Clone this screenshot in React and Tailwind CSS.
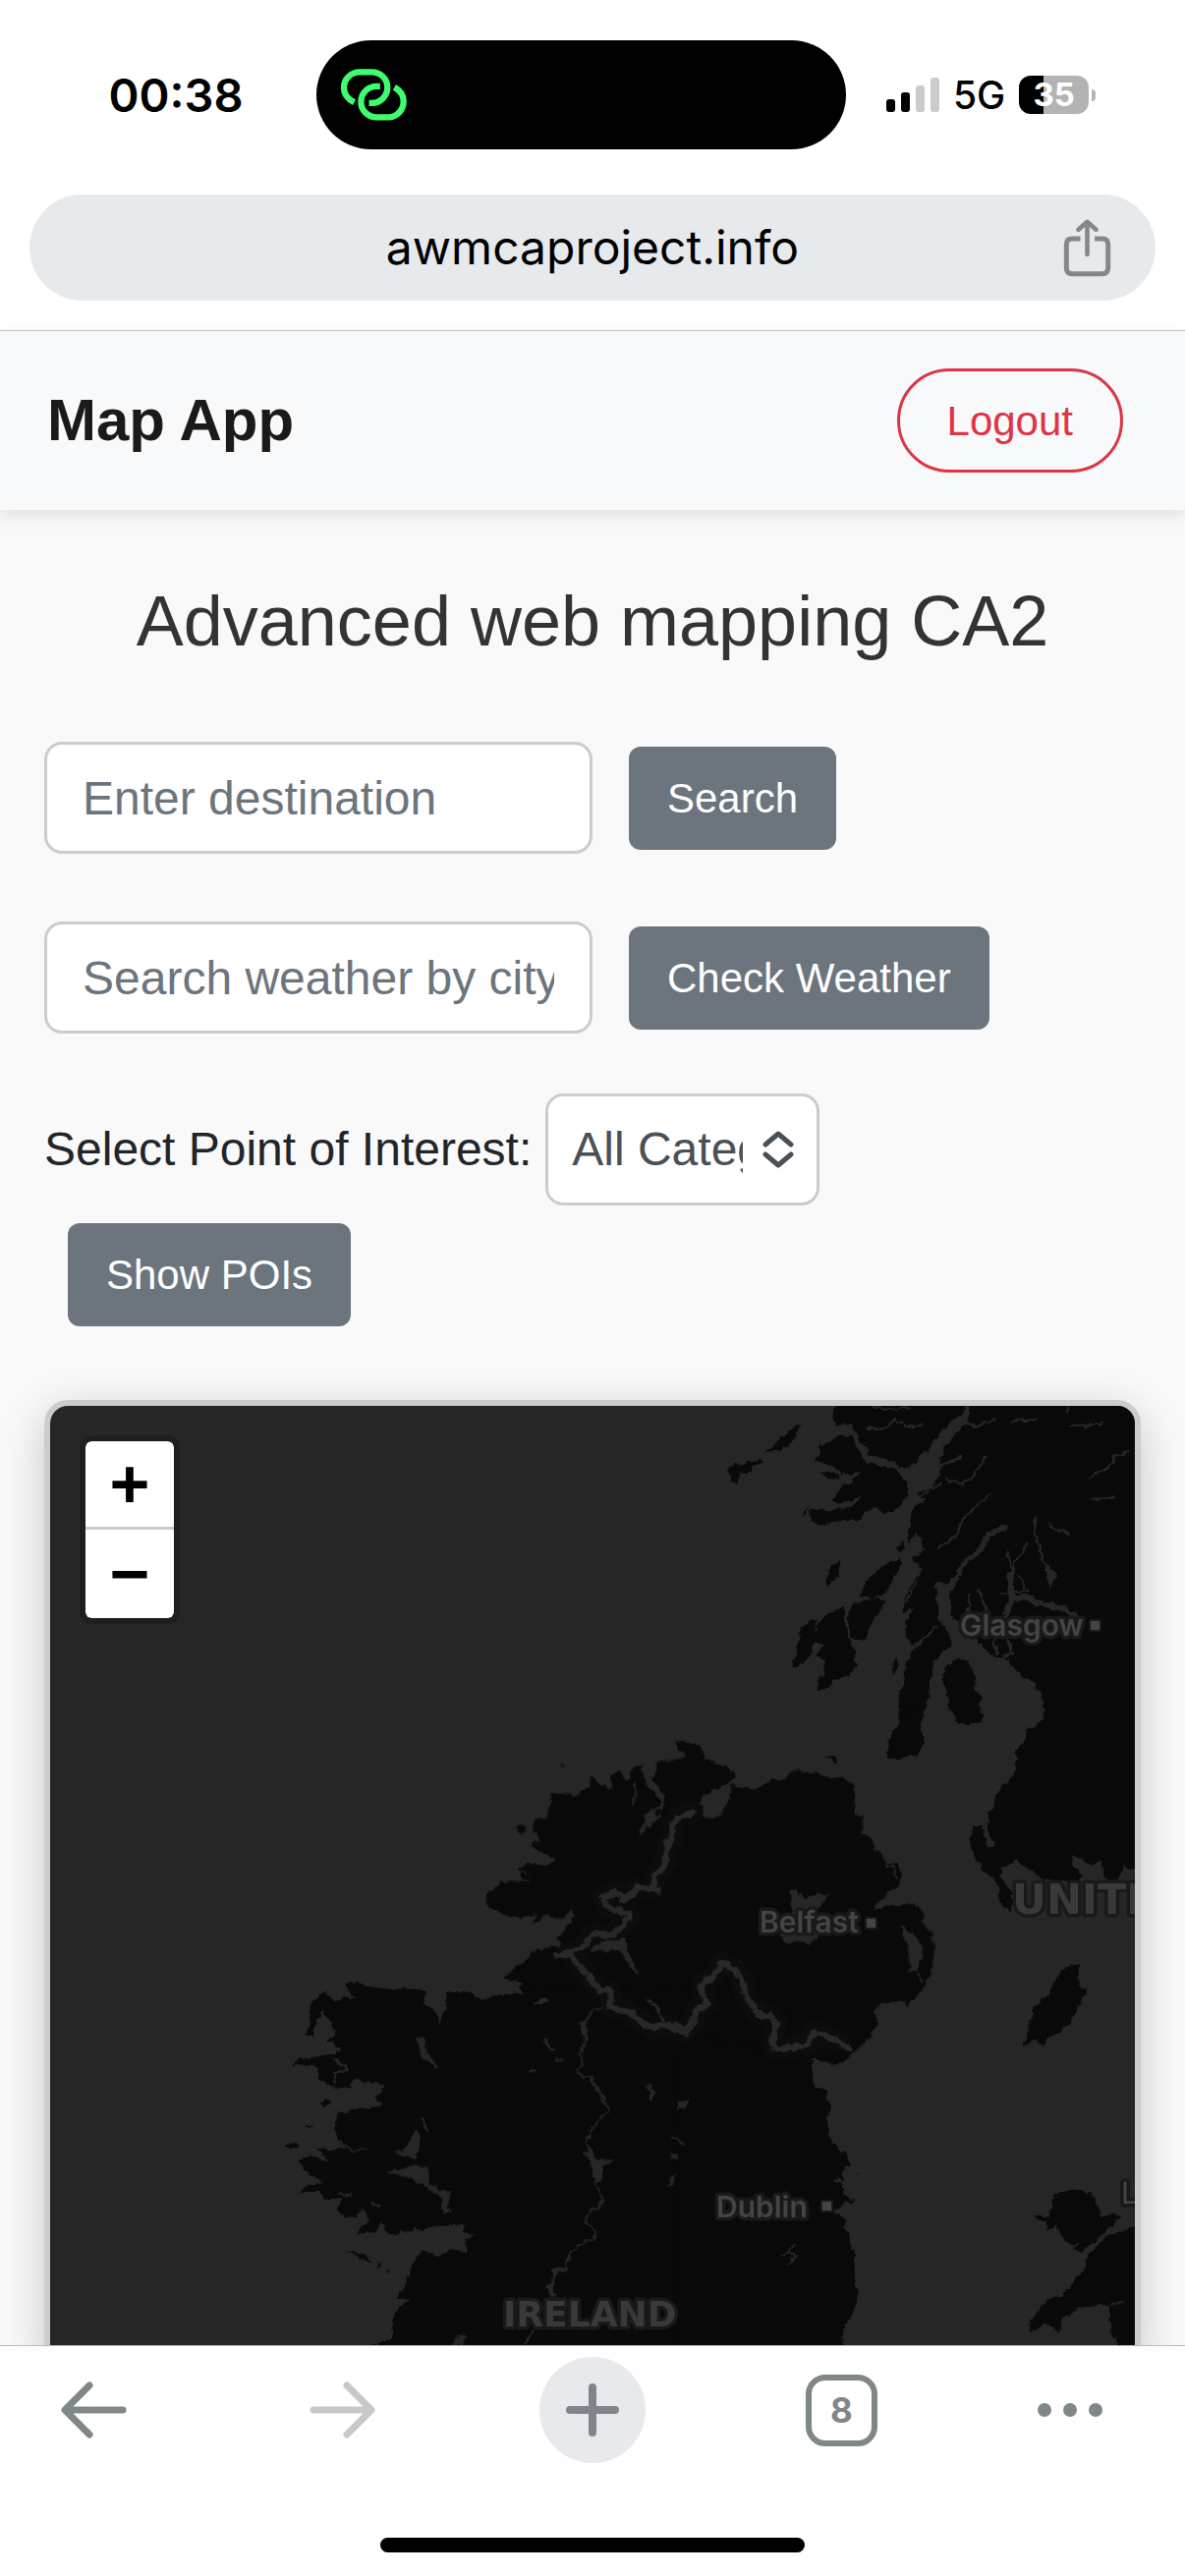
import React from 'react';

const INTER = "font-['Inter','Liberation_Sans',sans-serif]";

function StatusBar() {
  return (
    <div className={`grid grid-cols-[322fr_539fr_345fr] items-center pt-[41px] ${INTER}`}>
      <time className="justify-self-center pl-9 text-[47px] leading-none font-semibold">00:38</time>
      <div className="flex h-[111px] items-center rounded-full bg-black pl-6">
        <svg viewBox="138 118 208 164" className="h-[55px] w-[69px]" fill="none" stroke="#3dff6d" strokeWidth="19" aria-hidden="true">
          <path d="M182 223C162 213 150 198 150 178A48 48 0 0 1 198 130H236A47 47 0 0 1 236 225H227" />
          <path d="M261 174H250A47 47 0 0 0 250 269H286A48 48 0 0 0 333 220C333 200 322 186 305 177" />
        </svg>
      </div>
      <div className="flex items-center gap-3.5 pl-[41px]">
        <div className="flex h-[35px] items-end gap-1.5">
          <span className="h-[13px] w-[9px] rounded-[3px] bg-black" />
          <span className="h-5 w-[9px] rounded-[3px] bg-black" />
          <span className="h-[27px] w-[9px] rounded-[3px] bg-[#cbcbcb]" />
          <span className="h-[35px] w-[9px] rounded-[3px] bg-[#cbcbcb]" />
        </div>
        <span className="text-[39px] leading-none font-medium">5G</span>
        <div className="flex items-center gap-[3px]">
          <span className="flex h-[39px] w-[71px] items-center justify-center rounded-xl bg-linear-to-r from-black from-35% to-[#b3b3b3] to-35% text-[33px] leading-none font-bold text-white">35</span>
          <span className="h-3 w-1 rounded-r-full bg-[#b3b3b3]" />
        </div>
      </div>
    </div>
  );
}

function AddressBar() {
  return (
    <div className="px-[30px] pt-[46px] pb-[30px]">
      <div className="grid h-[108px] grid-cols-[1fr_auto_1fr] items-center rounded-full bg-[#e6eaed]">
        <span />
        <span className={`text-[48px] leading-none ${INTER}`}>awmcaproject.info</span>
        <button type="button" aria-label="Share" className="mr-[45px] justify-self-end">
          <svg viewBox="664 490 148 180" className="h-[60px] w-[49px]" fill="none" stroke="#82888d" strokeWidth="15" aria-hidden="true">
            <path d="M717 553H692Q674 553 674 571V643Q674 661 692 661H784Q802 661 802 643V571Q802 553 784 553H761" />
            <path d="M738 503V601M711 525L738 501L765 525" strokeWidth="14" strokeLinecap="round" strokeLinejoin="round" />
          </svg>
        </button>
      </div>
    </div>
  );
}

const GREY_BUTTON = 'h-[105px] rounded-xl bg-[#6c757d] px-[39px] text-[42px] text-white';
const FIELD = 'h-[114px] rounded-[18px] border-3 border-[#ccc] bg-white text-[48px]';

function SearchRow({ id, label, button }) {
  return (
    <form className="flex items-center gap-[37px]" onSubmit={(e) => e.preventDefault()}>
      <input id={id} type="text" aria-label={label} placeholder={label} className={`${FIELD} w-[558px] px-9 text-[#495057] placeholder:text-[#6c757d]`} />
      <button type="submit" className={GREY_BUTTON}>{button}</button>
    </form>
  );
}

const THIRD = 1 / 3;
const scotland = `translate(700 1400) scale(${THIRD})`;
const ulster = `translate(460 1740) scale(${THIRD})`;
const connacht = `translate(260 1960) scale(${THIRD})`;
const irishSea = `translate(700 1900) scale(${THIRD})`;

function MapCanvas() {
  return (
    <svg viewBox="51 1431 1104 975" preserveAspectRatio="xMinYMin slice" className="h-full w-full bg-[#262626]" role="img" aria-label="Map of Ireland and western Britain">
      <defs>
        <filter id="coast" x="-5%" y="-5%" width="110%" height="110%" colorInterpolationFilters="sRGB">
          <feTurbulence type="fractalNoise" baseFrequency="0.14" numOctaves="3" seed="4" />
          <feDisplacementMap in="SourceGraphic" scale="7" xChannelSelector="R" yChannelSelector="G" />
        </filter>
      </defs>
      <g filter="url(#coast)">
        <g fill="#090909">
          <g transform={scotland}>
            <path d="M455 80L438 125 450 148 500 150 520 185 550 238 620 262 655 285 690 270 725 235 760 185 810 140 835 120 852 80Z" />
            <path d="M470 180L435 200 398 215 405 235 390 262 440 275 470 300 500 302 527 290 500 325 470 340 440 385 470 390 530 372 500 400 430 415 400 405 376 408 375 440 400 460 430 448 515 442 560 408 580 400 600 427 640 405 667 370 670 328 640 290 590 275 545 268 520 225 500 190Z" />
            <path d="M342 150L318 160 285 187 262 214 240 236 272 230 308 215 330 185Z" />
            <path d="M230 262L205 256 175 270 140 268 123 290 130 320 152 330 162 300 195 295 200 272Z" />
            <path d="M404 295L425 290 465 305 460 315 430 312ZM370 400L350 420 355 432Z" />
            <path d="M845 80L860 93 855 145 815 178 780 225 768 260 772 300 745 345 700 360 725 385 692 400 680 430 675 510 700 480 725 530 685 560 718 590 690 630 660 690 655 725 690 710 668 745 665 800 688 832 665 885 658 940 645 975 643 1075 612 1105 608 1165 640 1172 700 1157 722 1110 715 1075 712 1060 735 990 742 930 750 870 805 825 808 800 785 765 765 730 755 635 800 645 795 700 810 765 860 800 900 825 930 858 975 870 1015 920 1060 940 1077 980 1090 1025 1080 1060 1035 1085 1030 1115 1003 1150 1000 1200 990 1225 940 1280 935 1310 915 1350 918 1390 942 1440 915 1442 905 1400 895 1370 870 1380 862 1420 880 1480 900 1510 935 1540 950 1565 950 1610 985 1638 1000 1600 955 1530 965 1500 1005 1478 1040 1510 1090 1540 1170 1545 1210 1530 1175 1500 1175 1460 1230 1495 1260 1480 1270 1540 1310 1540 1330 1500 1380 1510 1380 80Z" />
            <path d="M652 555L600 580 540 630 527 672 560 684 600 668 645 590Z" />
            <path d="M580 680L510 695 490 725 490 765 500 803 545 805 560 755 580 735 605 690Z" />
            <path d="M475 705L430 725 395 760 385 790 392 742 345 770 335 825 318 888 335 892 365 865 385 820 420 820 390 850 415 870 420 910 393 930 395 960 430 958 440 930 490 918 515 890 508 835 488 800 480 750Z" />
            <path d="M470 563L440 580 420 625 428 650 455 615ZM642 858L625 880 630 912 640 890ZM660 505L635 530 655 538Z" />
            <path d="M830 862L790 885 777 935 793 970 797 1015 820 1052 850 1068 895 1060 905 1040 885 1005 905 985 875 960 880 920 860 880Z" />
            <path d="M412 1165L455 1165 450 1190 440 1172Z" />
          </g>
          <g transform={ulster}>
            <path d="M680 93L740 105 765 120 770 150 830 170 865 192 855 217 780 255 735 310 775 330 820 330 835 290 850 260 853 228 870 238 940 242 975 215 1020 208 1050 183 1100 190 1160 215 1190 203 1225 235 1232 270 1225 320 1258 325 1250 375 1275 390 1300 435 1330 470 1360 468 1373 510 1365 540 1310 575 1285 612 1340 600 1405 590 1437 610 1440 660 1465 680 1475 740 1465 790 1452 830 1440 850 1415 880 1390 905 1380 888 1310 895 1293 915 1298 960 1275 1005 1225 1048 1190 1078 1160 1082 1100 1060 1093 1080 1095 1120 1110 1160 1145 1165 1143 1230 -20 1230 -20 860 50 865 90 888 130 873 160 880 195 917 213 905 175 878 222 868 202 850 215 835 155 820 235 758 240 740 325 725 340 715 320 700 350 665 378 625 360 612 330 642 290 625 242 662 265 625 205 637 160 628 105 602 103 570 150 530 190 520 245 530 205 512 215 500 245 510 200 485 240 470 290 475 320 455 280 440 243 425 245 400 270 400 243 365 255 335 290 330 305 252 350 258 370 268 420 235 425 202 450 225 490 245 484 200 515 185 535 225 550 180 578 165 588 215 625 265 640 285 590 320 570 385 615 345 640 330 648 285 645 255 612 215 625 158 690 155 715 142 690 120Z" />
            <path d="M197 352L225 360 220 382 200 375ZM327 165L350 180 335 175ZM1368 20L1368 -10 1440 -10Z" />
          </g>
          <g transform={connacht}>
            <path d="M600 200L660 205 690 228 755 212 900 200 1400 180 1400 1370 340 1370 360 1280 415 1265 420 1200 440 1160 475 1140 428 1140 455 1100 470 1050 510 990 555 1012 600 985 650 998 640 960 670 945 628 938 645 910 560 920 402 942 385 905 365 940 310 938 348 900 328 865 310 888 270 890 250 870 262 835 225 838 190 815 135 815 160 790 208 783 150 750 130 715 165 700 222 720 190 680 230 685 275 680 245 640 248 575 300 562 392 550 365 525 390 510 388 482 320 475 295 472 290 495 250 500 215 485 190 460 190 432 115 425 130 405 170 402 232 392 265 378 222 352 245 330 230 295 205 262 180 300 180 342 158 335 165 290 172 235 210 200 240 235 265 215 310 225 270 185 290 170 350 187 420 195 470 190 518 200 515 240 545 255 562 295 575 260Z" />
            <path d="M190 545L215 532 232 542 212 553ZM150 615L172 608 165 618ZM88 678L110 665 135 662 120 678ZM280 992L340 1008 355 1028 315 1015ZM365 1045L380 1027 388 1040 372 1050ZM395 1052L412 1055 402 1063Z" />
          </g>
          <g transform={irishSea}>
            <path d="M-40 500L385 590 375 630 385 665 425 683 420 715 435 730 425 770 430 815 460 860 490 885 492 910 470 930 475 1000 508 1020 480 1030 445 1050 480 1075 485 1110 510 1180 510 1280 525 1300 500 1370 475 1405 467 1550 -40 1550Z" />
            <path d="M1198 297L1150 308 1125 335 1105 385 1055 430 1045 480 1040 510 1020 550 1060 530 1085 545 1110 520 1150 490 1185 455 1190 430 1218 380 1195 365 1192 335Z" />
            <path d="M1180 985L1115 1000 1110 1050 1100 1075 1063 1060 1068 1078 1095 1085 1105 1108 1125 1095 1145 1135 1200 1180 1255 1135 1325 1065 1290 1060 1260 1072 1250 1030 1230 995Z" />
            <path d="M1380 1090L1365 1097 1320 1117 1272 1130 1218 1187 1208 1235 1140 1310 1090 1330 1040 1400 1040 1418 1100 1395 1135 1422 1145 1380 1180 1350 1260 1335 1290 1350 1290 1410 1325 1480 1380 1550Z" />
            <path d="M512 937L525 937 522 943Z" />
          </g>
        </g>
        <g fill="none" stroke="#262626" strokeLinejoin="round" strokeLinecap="round">
          <g transform={scotland} strokeWidth="7">
            <path d="M545 165L600 162 630 135 665 152 712 153M560 95L600 102 680 97M850 145L885 155 940 132M992 138L1030 138 1070 133M1170 152L1220 153 1268 145M1160 93L1158 112M1222 308L1280 285 1305 248 1345 232M1235 378L1297 370M770 275L835 250M790 316L840 330 865 315 885 285 907 248" />
            <path d="M768 527L815 495 845 430 895 385 925 362M1057 437L1065 500 1085 570M1102 455L1120 470 1168 483M1040 512L1000 570 988 620M975 535L990 590M1008 605L1030 650M887 655L912 715M858 672L862 720 900 735M690 828L735 795 758 768M1040 655L960 668" />
            <path d="M780 690L830 600 850 565 895 535 912 490 967 462" strokeWidth="15" />
            <path d="M780 650L785 740 830 800" strokeWidth="40" />
            <path d="M985 610L990 680 970 730M1180 730L1150 712 1070 695 1035 675 990 683" strokeWidth="17" />
            <path d="M700 310L760 250M710 370L770 330M688 550L725 530M660 700L700 630" strokeWidth="5" />
            <path d="M935 815L945 850M980 815L988 845 960 865M878 805L882 830" strokeWidth="10" />
            <path d="M1088 565L1132 612 1102 650Z" fill="#262626" stroke="none" />
          </g>
          <g transform={ulster}>
            <path d="M735 315L690 330 675 350 670 400 655 410 655 470 620 505 612 545 570 545 520 585 500 555 460 572 475 605 545 625 520 660 490 690 430 685 410 720 355 742 395 790 450 855 485 860 485 910 545 925 600 970 660 965 700 985 735 960 745 920 780 900 760 855 765 835 800 815 825 770 870 800 890 840 900 880 940 935 975 935 990 960 975 1025 995 1040 1090 1022 1100 990 1130 990 1180 1015" stroke="#0c0c0c" strokeWidth="70" />
            <path d="M735 315L690 330 675 350 670 400 655 410 655 470 620 505 612 545 570 545 520 585M612 545L632 555M500 555L460 572 475 605 545 625 520 660 490 690 430 685 410 720 355 742 395 790 450 855 485 860 485 910 545 925 600 970 660 965 700 985 735 960 745 920 780 900 760 855 765 835 800 815 825 770 870 800 890 840 900 880 940 935 975 935 990 960 975 1025 995 1040 1090 1022 1100 990 1130 990 1215 1035M500 555L520 570M320 750L360 745" stroke="#282828" strokeWidth="18" />
            <path d="M690 965L715 985 740 945" strokeWidth="24" />
            <path d="M595 888L625 905 645 955M250 893L292 887" strokeWidth="9" />
            <path d="M462 908L425 925 405 960 407 1010 392 1050 398 1080 385 1100 400 1125 425 1118 440 1155 462 1200" strokeWidth="6" />
            <path d="M390 955L413 955 405 1015Z" fill="#262626" strokeWidth="4" />
            <path d="M425 735L450 710 530 700 535 740 570 810 530 760 510 735Z" fill="#262626" strokeWidth="3" />
            <path d="M1050 540L1032 560 1040 620 1000 690 1020 712 1060 708 1095 720 1115 690 1120 610 1150 565 1125 562 1085 575 1060 565Z" fill="#262626" stroke="none" />
            <path d="M1372 660L1415 690 1437 730 1432 770 1415 795 1385 808 1400 790 1393 720 1380 700Z" fill="#262626" stroke="none" />
            <path d="M1415 795L1438 830M1330 480L1345 480 1358 515M555 225L560 255 552 290" strokeWidth="6" />
            <path d="M285 1010L308 1040M315 1068L335 1068M240 1105L255 1100M602 1150L615 1170 605 1190" strokeWidth="9" />
            <circle cx="632" cy="313" r="10" fill="#090909" stroke="none" />
          </g>
          <g transform={connacht}>
            <path d="M1008 640L1015 690 1000 695 1025 720 1035 785 1052 780 1062 730 1095 718 1070 712 1045 722 1020 680ZM495 340L515 345 525 390 555 430 545 438 530 412 510 405ZM490 625L502 650 485 710 455 705 425 692 455 685ZM400 750L440 745 480 735 525 738 530 790 580 815 598 818 585 840 595 875 575 880 565 820 520 800 480 770 430 758ZM905 1045L955 1045 925 1060 905 1095 915 1130 900 1130 885 1100 912 1075ZM605 1260L640 1250 635 1280 605 1280ZM1300 535L1320 535 1315 550 1288 560ZM1268 690L1288 710 1275 710ZM1280 762L1280 780 1260 793Z" fill="#262626" strokeWidth="3" />
            <path d="M1025 460L1040 500 1060 520 1078 565 1040 605 1015 650M1042 790L1062 840 1050 860 1018 875 1008 905 1042 940 1035 962 1005 965 965 995 945 1040M850 1235L822 1275M262 662L295 685 335 685M510 590L525 630M1275 645L1312 670" strokeWidth="6" />
            <path d="M238 405L280 440 240 455 245 480M250 820L290 822M355 845L380 860M1205 490L1210 525" strokeWidth="8" />
          </g>
          <g transform={irishSea} strokeWidth="6">
            <path d="M325 1155L310 1180 290 1190M315 1180L330 1190 305 1210M450 960L475 965M1175 1160L1190 1150M1290 1340L1328 1328" />
          </g>
        </g>
      </g>
      <g fill="#444" stroke="#191919" strokeWidth="7" strokeLinejoin="round" paintOrder="stroke" fontSize="30" fontWeight="600" fontFamily="Inter, sans-serif">
        <text x="977" y="1665">Glasgow</text>
        <text x="773" y="1967">Belfast</text>
        <text x="729" y="2257">Dublin</text>
        <g fontFamily="'DejaVu Sans', sans-serif" fill="#393939" fontWeight="700">
          <text x="512" y="2368" fontSize="36">IRELAND</text>
          <text x="1030" y="1948" fontSize="43">UNITED</text>
        </g>
        <text x="1141" y="2243" fontWeight="400">L</text>
        <path d="M1110 1650h9v9h-9zM882 1953h9v9h-9zM837 2241h9v9h-9z" strokeWidth="4" />
      </g>
    </svg>
  );
}

function MapPanel() {
  return (
    <section className="relative -mb-6 min-h-0 flex-1 overflow-hidden rounded-3xl border-6 border-[#ccc] shadow-[0_12px_45px_rgba(0,0,0,0.2)]">
      <MapCanvas />
      <div className="absolute top-[30px] left-[30px] flex flex-col overflow-hidden rounded-xl border-6 border-black/20 bg-clip-padding text-[70px] leading-none font-bold text-black">
        <button type="button" aria-label="Zoom in" className="flex h-[90px] w-[90px] items-center justify-center rounded-t-md border-b-3 border-[#ccc] bg-white">+</button>
        <button type="button" aria-label="Zoom out" className="flex h-[90px] w-[90px] items-center justify-center rounded-b-md bg-white">−</button>
      </div>
    </section>
  );
}

function BrowserToolbar() {
  return (
    <footer className="relative border-t border-[#b9b9bb] bg-white">
      <nav aria-label="Browser" className="grid grid-cols-[190fr_318fr_190fr_317fr_191fr] items-center justify-items-center pt-[11px] text-[#7f8789]">
        <button type="button" aria-label="Back">
          <svg viewBox="0 0 68 60" className="h-[60px] w-[68px]" fill="none" stroke="currentColor" strokeWidth="7" strokeLinecap="round" strokeLinejoin="round"><path d="M64 30H6M30 5L5 30L30 55" /></svg>
        </button>
        <button type="button" aria-label="Forward" disabled className="text-[#c8c8c8]">
          <svg viewBox="0 0 68 60" className="h-[60px] w-[68px]" fill="none" stroke="currentColor" strokeWidth="7" strokeLinecap="round" strokeLinejoin="round"><path d="M4 30H62M38 5L63 30L38 55" /></svg>
        </button>
        <button type="button" aria-label="New tab" className="flex h-[108px] w-[108px] items-center justify-center rounded-full bg-[#e8e9ed] text-[#80858c]">
          <svg viewBox="0 0 56 56" className="h-14 w-14" stroke="currentColor" strokeWidth="8" strokeLinecap="round"><path d="M28 5V51M5 28H51" /></svg>
        </button>
        <button type="button" aria-label="8 open tabs" className={`flex h-[73px] w-[73px] items-center justify-center rounded-[20px] border-6 border-current text-[35px] leading-none font-bold ${INTER}`}>8</button>
        <button type="button" aria-label="More" className="mr-11 flex gap-3">
          <span className="h-3.5 w-3.5 rounded-full bg-current" />
          <span className="h-3.5 w-3.5 rounded-full bg-current" />
          <span className="h-3.5 w-3.5 rounded-full bg-current" />
        </button>
      </nav>
      <div className="mx-auto mt-[76px] mb-6 h-[15px] w-[432px] rounded-full bg-black" />
    </footer>
  );
}

export default function App() {
  return (
    <div className="flex h-screen flex-col overflow-hidden bg-[#f9f9f9] font-['Liberation_Sans',Arial,sans-serif]">
      <header className="border-b border-[#c0c3c7] bg-white text-black">
        <StatusBar />
        <AddressBar />
      </header>
      <div className="relative flex items-center justify-between bg-[#f8f9fb] py-[38px] pr-[63px] pl-12 shadow-[0_6px_15px_rgba(0,0,0,0.1)]">
        <a href="#home" className="text-[60px] leading-none font-bold text-[#1a1a1a]">Map App</a>
        <button type="button" className="h-[106px] rounded-full border-3 border-[#dc3545] px-12 text-[42px] text-[#dc3545]">Logout</button>
      </div>
      <main className="flex min-h-0 flex-1 flex-col overflow-hidden px-[45px] pt-[70px]">
        <h1 className="text-center text-[72px] leading-[86px] text-[#333]">Advanced web mapping CA2</h1>
        <div className="mt-20 flex flex-col gap-[69px]">
          <SearchRow id="destination" label="Enter destination" button="Search" />
          <SearchRow id="city" label="Search weather by city" button="Check Weather" />
        </div>
        <form className="mt-[61px]" onSubmit={(e) => e.preventDefault()}>
          <div className="flex items-center gap-3.5">
            <label htmlFor="poi" className="text-[48px] text-[#212529]">Select Point of Interest:</label>
            <div className="relative">
              <select id="poi" className={`${FIELD} block w-[279px] appearance-none pr-[75px] pl-6 text-[#495057]`}>
                <option>All Categories</option>
              </select>
              <svg viewBox="0 0 32 38" className="pointer-events-none absolute top-[38px] right-[26px] h-[38px] w-8" fill="none" stroke="#495057" strokeWidth="5" strokeLinecap="round" strokeLinejoin="round" aria-hidden="true">
                <path d="M3 14L16 3L29 14M3 24L16 35L29 24" />
              </svg>
            </div>
          </div>
          <button type="submit" className={`${GREY_BUTTON} mt-[18px] mb-[75px] ml-6`}>Show POIs</button>
        </form>
        <MapPanel />
      </main>
      <BrowserToolbar />
    </div>
  );
}
